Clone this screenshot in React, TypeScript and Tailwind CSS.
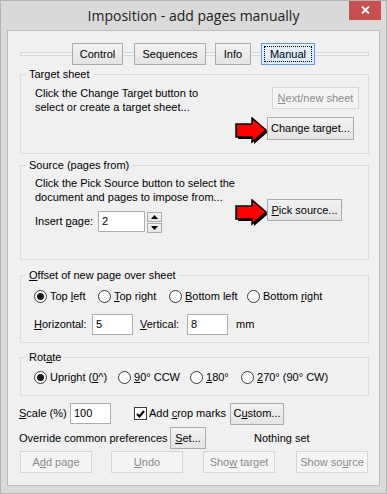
import type { ReactNode } from 'react'

// Windows 8 style dialog: "Imposition - add pages manually"

interface BtnProps {
  children: ReactNode
  className?: string
  disabled?: boolean
  focused?: boolean
}

function Btn({ children, className = '', disabled, focused }: BtnProps) {
  const look = disabled
    ? 'border-[#d5d5d5] bg-[#f4f4f4] text-[#8a8a8a]'
    : focused
    ? 'border-[#5d9ce0] bg-linear-to-b from-[#eaf3fc] to-[#d9eafb] text-black'
    : 'border-[#acacac] bg-linear-to-b from-[#f2f2f2] to-[#e4e4e4] text-black'
  return (
    <div className={`relative flex shrink-0 items-center justify-center border whitespace-nowrap ${look} ${className}`}>
      {focused && <div className="absolute inset-[2px] border border-dotted border-black" />}
      <span className="relative">{children}</span>
    </div>
  )
}

function U({ children }: { children: ReactNode }) {
  return <span className="underline underline-offset-[1px]">{children}</span>
}

function Group({ label, className = '', children }: { label: ReactNode; className?: string; children?: ReactNode }) {
  return (
    <div className={`relative ml-[12px] w-[349px] shrink-0 border border-[#dcdcdc] ${className}`}>
      <span className="absolute left-[5px] top-[-7px] bg-[#f0f0f0] px-[3px] leading-[13px] whitespace-nowrap">{label}</span>
      {children}
    </div>
  )
}

function Radio({ checked, children, className = '' }: { checked?: boolean; children: ReactNode; className?: string }) {
  return (
    <div className={`flex h-[13px] shrink-0 items-center whitespace-nowrap ${className}`}>
      <span className="flex h-[13px] w-[13px] shrink-0 items-center justify-center rounded-full border border-[#3a3a3a] bg-white">
        {checked && <span className="h-[7px] w-[7px] rounded-full bg-[#1a1a1a]" />}
      </span>
      <span className="ml-[3px] leading-[13px]">{children}</span>
    </div>
  )
}

function Field({ value, className = '' }: { value: string; className?: string }) {
  return (
    <div className={`flex h-[21px] shrink-0 items-center border border-[#abadb3] bg-white pl-[3px] ${className}`}>
      {value}
    </div>
  )
}

function Arrow() {
  return (
    <svg width="34" height="29" viewBox="0 0 34 29" className="shrink-0">
      <polygon points="3,9 19,9 19,3 33,15 19,27 19,22 3,22" fill="#000" />
      <polygon points="1,7 17,7 17,1 31,13 17,25 17,20 1,20" fill="#ff0000" stroke="#000" strokeWidth="1.5" strokeLinejoin="miter" />
    </svg>
  )
}

function SpinBtn({ up }: { up?: boolean }) {
  return (
    <div className="flex h-[10px] w-[15px] items-center justify-center border border-[#acacac] bg-linear-to-b from-[#f2f2f2] to-[#e4e4e4]">
      <svg width="7" height="4" viewBox="0 0 7 4">
        <polygon points={up ? '0,4 7,4 3.5,0' : '0,0 7,0 3.5,4'} fill="#000" />
      </svg>
    </div>
  )
}

export default function App() {
  return (
    <div className="flex h-[494px] w-[387px] flex-col overflow-hidden border border-[#b4b4b4] bg-[#dadada] font-['Liberation_Sans',Arial,sans-serif] text-[11px] text-black">
      {/* title bar */}
      <div className="relative flex h-[29px] shrink-0 items-center justify-center">
        <span className="font-['Open_Sans',sans-serif] text-[14px] leading-[20px] text-[#222]">Imposition - add pages manually</span>
        <div className="absolute right-[5px] top-[-1px] flex h-[20px] w-[32px] items-center justify-center bg-[#c75050]">
          <svg width="9" height="8" viewBox="0 0 9 8">
            <path d="M1 0.5 L8 7.5 M8 0.5 L1 7.5" stroke="#fff" strokeWidth="1.8" />
          </svg>
        </div>
      </div>

      {/* client area */}
      <div className="mx-[6px] flex h-[456px] shrink-0 flex-col border border-[#bdbdbd] bg-[#f0f0f0]">
        {/* tab buttons */}
        <div className="relative mt-[12px] flex h-[22px] shrink-0">
          <div className="absolute left-[12px] top-[9px] h-[4px] w-[349px] border border-[#d6d6d6] bg-[#f6f6f6]" />
          <Btn className="ml-[64px] h-[22px] w-[51px]">Control</Btn>
          <Btn className="ml-[11px] h-[22px] w-[72px]">Sequences</Btn>
          <Btn className="ml-[9px] h-[22px] w-[36px]">Info</Btn>
          <Btn focused className="ml-[10px] h-[22px] w-[54px]">Manual</Btn>
        </div>

        {/* target sheet */}
        <Group label="Target sheet" className="mt-[9px] h-[80px]">
          <div className="flex">
            <div className="w-[214px] pl-[14px] pt-[11px] leading-[14px] whitespace-nowrap">
              Click the Change Target button to
              <br />
              select or create a target sheet...
            </div>
            <div className="flex flex-col">
              <Btn disabled className="ml-[37px] mt-[12px] h-[22px] w-[87px]">
                <U>N</U>ext/new sheet
              </Btn>
              <div className="mt-[8px] flex items-start">
                <Arrow />
                <Btn className="-ml-[2px] h-[23px] w-[87px]">Change target...</Btn>
              </div>
            </div>
          </div>
        </Group>

        {/* source */}
        <Group label="Source (pages from)" className="mt-[11px] h-[95px]">
          <div className="flex">
            <div className="w-[214px] pl-[14px] pt-[10px]">
              <div className="leading-[14px] whitespace-nowrap">
                Click the Pick Source button to select the
                <br />
                document and pages to impose from...
              </div>
              <div className="mt-[7px] flex items-start">
                <div className="flex h-[21px] w-[63px] items-center whitespace-nowrap">
                  <span>
                    Insert <U>p</U>age:
                  </span>
                </div>
                <Field value="2" className="w-[47px]" />
                <div className="ml-[2px] mt-[1px] flex flex-col gap-[1px]">
                  <SpinBtn up />
                  <SpinBtn />
                </div>
              </div>
            </div>
            <div className="mt-[33px] flex items-start">
              <Arrow />
              <Btn className="-ml-[2px] h-[22px] w-[75px]">
                <U>P</U>ick source...
              </Btn>
            </div>
          </div>
        </Group>

        {/* offset */}
        <Group
          label={
            <>
              <U>O</U>ffset of new page over sheet
            </>
          }
          className="mt-[15px] h-[68px]"
        >
          <div className="mt-[14px] flex pl-[13px]">
            <Radio checked className="w-[64px]">
              Top <U>l</U>eft
            </Radio>
            <Radio className="w-[71px]">
              <U>T</U>op right
            </Radio>
            <Radio className="w-[78px]">
              <U>B</U>ottom left
            </Radio>
            <Radio>
              Bottom <U>r</U>ight
            </Radio>
          </div>
          <div className="mt-[11px] flex items-center pl-[13px]">
            <span className="w-[58px] shrink-0 whitespace-nowrap">
              <U>H</U>orizontal:
            </span>
            <Field value="5" className="w-[41px]" />
            <span className="ml-[7px] w-[47px] shrink-0 whitespace-nowrap">
              <U>V</U>ertical:
            </span>
            <Field value="8" className="w-[41px]" />
            <span className="ml-[8px]">mm</span>
          </div>
        </Group>

        {/* rotate */}
        <Group
          label={
            <>
              Rot<U>a</U>te
            </>
          }
          className="mt-[14px] h-[39px]"
        >
          <div className="mt-[13px] flex pl-[13px]">
            <Radio checked className="w-[84px]">
              Upright (<U>0</U>^)
            </Radio>
            <Radio className="w-[72px]">
              <U>9</U>0° CCW
            </Radio>
            <Radio className="w-[51px]">
              <U>1</U>80°
            </Radio>
            <Radio>
              <U>2</U>70° (90° CW)
            </Radio>
          </div>
        </Group>

        {/* scale + crop marks */}
        <div className="ml-[11px] mt-[6px] flex h-[23px] shrink-0 items-center">
          <span className="w-[51px] shrink-0 whitespace-nowrap">
            <U>S</U>cale (%)
          </span>
          <Field value="100" className="w-[41px]" />
          <span className="ml-[23px] flex h-[13px] w-[13px] shrink-0 items-center justify-center border border-[#3a3a3a] bg-white">
            <svg width="9" height="8" viewBox="0 0 9 8">
              <path d="M1 4 L3.5 6.5 L8 1" fill="none" stroke="#000" strokeWidth="2" />
            </svg>
          </span>
          <span className="ml-[2px] w-[81px] shrink-0 whitespace-nowrap">
            Add <U>c</U>rop marks
          </span>
          <Btn className="h-[22px] w-[54px]">
            C<U>u</U>stom...
          </Btn>
        </div>

        {/* override */}
        <div className="ml-[11px] mt-[2px] flex h-[22px] shrink-0 items-center">
          <span className="w-[151px] shrink-0 whitespace-nowrap">Override common preferences</span>
          <Btn className="h-[22px] w-[36px]">
            <U>S</U>et...
          </Btn>
          <span className="ml-[48px] whitespace-nowrap">Nothing set</span>
        </div>

        {/* bottom buttons */}
        <div className="ml-[12px] mt-[2px] flex shrink-0">
          <Btn disabled className="h-[22px] w-[72px]">
            A<U>d</U>d page
          </Btn>
          <Btn disabled className="ml-[19px] h-[22px] w-[72px]">
            <U>U</U>ndo
          </Btn>
          <Btn disabled className="ml-[20px] h-[22px] w-[72px]">
            Sho<U>w</U> target
          </Btn>
          <Btn disabled className="ml-[21px] h-[22px] w-[72px]">
            Show so<U>u</U>rce
          </Btn>
        </div>
      </div>
    </div>
  )
}
